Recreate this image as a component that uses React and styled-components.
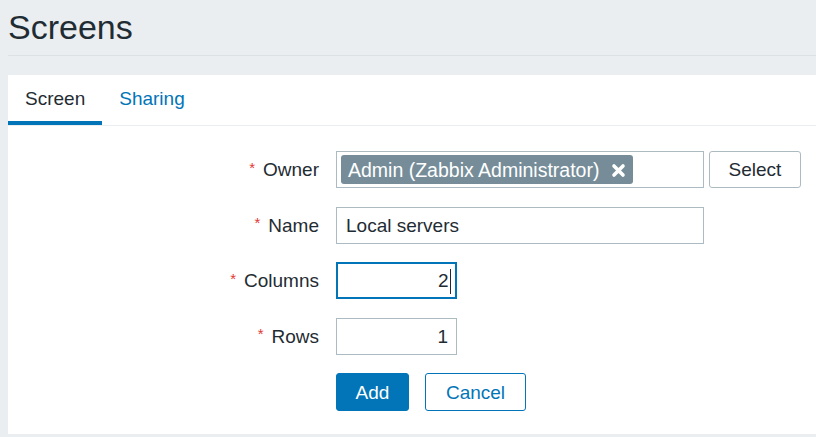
import React from 'react';
import styled, {createGlobalStyle} from 'styled-components';

const GlobalStyle = createGlobalStyle`
	html, body {
		margin: 0;
		padding: 0;
		overflow: hidden;
		background: #ebeef0;
		font-family: 'Liberation Sans', Arial, sans-serif;
		color: #1f2c33;
	}
`;

const Page = styled.div`
	width: 840px;
	padding-left: 8px;
`;

const Header = styled.div`
	height: 56px;
	box-sizing: border-box;
	padding-top: 10px;
	border-bottom: 1px solid #dce1e4;
	margin-bottom: 19px;
`;

const Title = styled.h1`
	margin: 0;
	font-size: 34px;
	line-height: 34px;
	font-weight: normal;
	color: #1f2c33;
`;

const Panel = styled.div`
	background: #fff;
	height: 359px;
`;

const TabList = styled.div`
	display: flex;
	border-bottom: 1px solid #ebeef0;
`;

const Tab = styled.div`
	padding: 14px 17px 13px;
	font-size: 19px;
	line-height: 19px;
	color: ${p => (p.active ? '#1f2c33' : '#0275b8')};
	border-bottom: 4px solid ${p => (p.active ? '#0275b8' : 'transparent')};
`;

const Form = styled.div`
	display: grid;
	grid-template-columns: 311px 1fr;
	column-gap: 17px;
	row-gap: 18.5px;
	padding-top: 25px;
	grid-auto-rows: 37px;
`;

const Label = styled.div`
	display: flex;
	align-items: center;
	justify-content: flex-end;
	font-size: 19px;
	padding-top: 1px;
`;

const Asterisk = styled.span`
	color: #e33734;
	font-size: 15px;
	margin-right: 8px;
	align-self: center;
	position: relative;
	top: -3px;
`;

const Controls = styled.div`
	display: flex;
	align-items: stretch;
	gap: 5px;
`;

const Field = styled.div`
	box-sizing: border-box;
	width: ${p => p.width}px;
	height: 37px;
	border: ${p => (p.focused ? '2px solid #0275b8' : '1px solid #acbbc2')};
	display: flex;
	align-items: center;
	justify-content: ${p => (p.right ? 'flex-end' : 'flex-start')};
	padding: ${p => (p.focused ? '1px 4px 0 8px' : '1px 8px 0 9px')};
	font-size: 19px;
	background: #fff;
`;

const MultiSelect = styled.div`
	box-sizing: border-box;
	width: 368px;
	height: 37px;
	border: 1px solid #acbbc2;
	padding: 3px 4px;
	display: flex;
`;

const Tag = styled.div`
	display: flex;
	align-items: center;
	gap: 12px;
	background: #768d99;
	color: #fff;
	border-radius: 3px;
	padding: 1px 7px 0;
	font-size: 19.5px;
	height: 29px;
	box-sizing: border-box;
`;

const Caret = styled.span`
	display: inline-block;
	width: 1.5px;
	height: 25px;
	background: #1f2c33;
	margin-left: 1px;
`;

const Button = styled.button`
	box-sizing: border-box;
	height: ${p => (p.alt ? 37 : 38)}px;
	width: ${p => p.width}px;
	font-family: inherit;
	font-size: 19px;
	border-radius: 3px;
	cursor: pointer;
	background: ${p => (p.primary ? '#0275b8' : '#fff')};
	color: ${p => (p.primary ? '#fff' : p.alt ? '#1f2c33' : '#0275b8')};
	border: 1px solid ${p => (p.alt ? '#acbbc2' : '#0275b8')};
	padding: 1px 0 0;
`;

const Buttons = styled.div`
	display: flex;
	gap: 16px;
	align-items: flex-start;
`;

const RemoveIcon = () => (
	<svg width="15" height="15" viewBox="0 0 15 15">
		<path d="M3 3 L12 12 M12 3 L3 12" stroke="#fff" strokeWidth="3.6" strokeLinecap="round" />
	</svg>
);

const Required = ({children}) => (
	<Label>
		<Asterisk>*</Asterisk>
		{children}
	</Label>
);

export default function App() {
	return (
		<Page>
			<GlobalStyle />
			<Header>
				<Title>Screens</Title>
			</Header>
			<Panel>
				<TabList>
					<Tab active>Screen</Tab>
					<Tab>Sharing</Tab>
				</TabList>
				<Form>
					<Required>Owner</Required>
					<Controls>
						<MultiSelect>
							<Tag>
								Admin (Zabbix Administrator)
								<RemoveIcon />
							</Tag>
						</MultiSelect>
						<Button alt width={92}>Select</Button>
					</Controls>

					<Required>Name</Required>
					<Controls>
						<Field width={368}>Local servers</Field>
					</Controls>

					<Required>Columns</Required>
					<Controls>
						<Field width={121} right focused>
							2<Caret />
						</Field>
					</Controls>

					<Required>Rows</Required>
					<Controls>
						<Field width={121} right>1</Field>
					</Controls>

					<div />
					<Buttons>
						<Button primary width={73}>Add</Button>
						<Button width={101}>Cancel</Button>
					</Buttons>
				</Form>
			</Panel>
		</Page>
	);
}
